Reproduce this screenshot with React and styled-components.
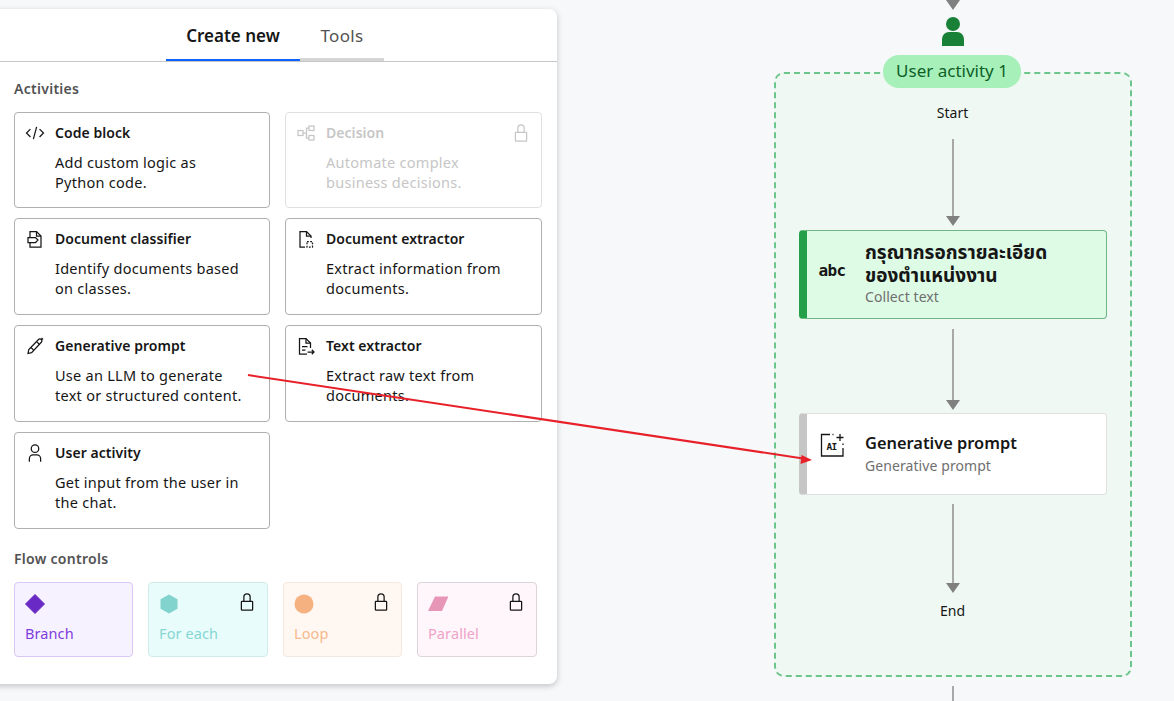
import React from 'react';
import styled, { createGlobalStyle } from 'styled-components';

const FONT = `"Noto Sans", "Noto Sans Thai", "DejaVu Sans", sans-serif`;

const GlobalStyle = createGlobalStyle`
  html, body {
    margin: 0;
    padding: 0;
    height: 701px;
    overflow: hidden;
    background: #f7f8fa;
    font-family: ${FONT};
  }
`;

const Page = styled.div`
  position: relative;
  display: flex;
  align-items: flex-start;
  width: 1174px;
  height: 701px;
  overflow: hidden;
`;

const Panel = styled.aside`
  flex: none;
  width: 567px;
  height: 675px;
  margin: 9px 0 0 -10px;
  background: #fff;
  border-radius: 8px;
  box-shadow: 0 2px 6px rgba(0, 0, 0, 0.22);
`;

const TabBar = styled.div`
  display: flex;
  height: 52px;
  padding-left: 176px;
  border-bottom: 1px solid #c6c6c6;
`;

const Tab = styled.div`
  display: flex;
  align-items: center;
  justify-content: center;
  width: ${({ $active }) => ($active ? '134px' : '84px')};
  height: 52px;
  padding-top: 3px;
  box-sizing: border-box;
  border-bottom: ${({ $active }) => ($active ? '2px solid #0f62fe' : '3px solid #d6d6d6')};
  font-size: 17px;
  font-weight: ${({ $active }) => ($active ? 600 : 400)};
  letter-spacing: ${({ $active }) => ($active ? '0' : '0.3px')};
  color: ${({ $active }) => ($active ? '#161616' : '#525252')};
`;

const Body = styled.div`
  padding: 0 15px 0 24px;
`;

const SectionLabel = styled.div`
  height: 20px;
  margin: ${({ $top }) => $top} 0 13px;
  font-size: 14px;
  line-height: 20px;
  font-weight: 600;
  color: #525252;
  letter-spacing: 0.28px;
`;

const ActivityGrid = styled.div`
  display: grid;
  grid-template-columns: 256px 257px;
  grid-template-rows: 96px 97px 97px 97px;
  column-gap: 15px;
  row-gap: 10px;
`;

const Card = styled.div`
  display: grid;
  grid-template-columns: 20px 1fr 20px;
  grid-template-rows: 20px auto;
  column-gap: 10px;
  row-gap: 9px;
  padding: 10px;
  box-sizing: border-box;
  background: #fff;
  border: 1px solid ${({ $disabled }) => ($disabled ? '#e0e0e0' : '#b0b0b0')};
  border-radius: 4px;
  color: ${({ $disabled }) => ($disabled ? '#c6c6c6' : '#161616')};
  svg {
    display: block;
  }
`;

const CardTitle = styled.div`
  font-size: 14px;
  line-height: 20px;
  font-weight: 600;
  letter-spacing: 0.05px;
  white-space: nowrap;
`;

const CardText = styled.div`
  grid-column: 2 / 4;
  font-size: 14.5px;
  line-height: 20px;
  letter-spacing: 0.27px;
  white-space: pre-line;
`;

const ControlRow = styled.div`
  display: grid;
  grid-template-columns: 119px 120px 119px 120px;
  column-gap: 15px;
`;

const ControlCard = styled.div`
  display: flex;
  flex-direction: column;
  justify-content: space-between;
  height: 75px;
  padding: 11px 10px 13px;
  box-sizing: border-box;
  background: ${({ $bg }) => $bg};
  border: 1px solid ${({ $border }) => $border};
  border-radius: 4px;
  color: ${({ $color }) => $color};
  font-size: 14.5px;
  line-height: 20px;
  letter-spacing: 0.1px;
`;

const ControlHead = styled.div`
  display: flex;
  justify-content: space-between;
  align-items: flex-start;
  height: 20px;
  color: #161616;
  svg + svg {
    margin-top: -2px;
  }
`;

const Canvas = styled.main`
  display: flex;
  flex-direction: column;
  align-items: center;
  flex: none;
  width: 358px;
  margin-left: 217px;
`;

const ArrowHead = styled.div`
  flex: none;
  width: 0;
  height: 0;
  margin-right: 1px;
  border-left: 7px solid transparent;
  border-right: 7px solid transparent;
  border-top: 10px solid #808080;
`;

const Person = styled.svg`
  flex: none;
  display: block;
  margin: 7px 1px 0 0;
`;

const Group = styled.section`
  position: relative;
  display: flex;
  flex-direction: column;
  align-items: center;
  flex: none;
  width: 358px;
  height: 605px;
  margin-top: 26px;
  box-sizing: border-box;
  background: #eff8f3;
  border: 2px dashed #6cc58a;
  border-radius: 10px;
`;

const Pill = styled.div`
  position: absolute;
  top: -19px;
  left: 107px;
  width: 138px;
  height: 33px;
  padding-bottom: 2px;
  box-sizing: border-box;
  display: flex;
  align-items: center;
  justify-content: center;
  background: #a7f0ba;
  border-radius: 16px;
  color: #0e6027;
  font-size: 17px;
`;

const EndLabel = styled.div`
  height: 20px;
  margin: ${({ $top }) => $top} 1px 0 0;
  font-size: 14px;
  line-height: 20px;
  color: #161616;
`;

const Line = styled.div`
  flex: none;
  width: 2px;
  height: ${({ $h }) => $h};
  margin: ${({ $top }) => $top} 1px 0 0;
  background: #a8a8a8;
`;

const Node = styled.div`
  display: flex;
  align-items: center;
  flex: none;
  width: 308px;
  height: ${({ $h }) => $h};
  margin-top: ${({ $top }) => $top};
  padding-bottom: 2px;
  box-sizing: border-box;
  overflow: hidden;
  background: ${({ $bg }) => $bg};
  border: 1px solid ${({ $border }) => $border};
  border-left: 8px solid ${({ $bar }) => $bar};
  border-radius: 4px;
`;

const NodeIcon = styled.div`
  flex: none;
  display: flex;
  align-items: center;
  justify-content: center;
  width: 50px;
  height: 26px;
  margin: 0 8px ${({ $lift }) => $lift} 0;
  color: #161616;
  font-family: "DejaVu Sans Mono", monospace;
  font-size: 16px;
  font-weight: 700;
  letter-spacing: -0.6px;
`;

const NodeTitle = styled.div`
  font-size: ${({ $size }) => $size || '16.4px'};
  line-height: 23px;
  font-weight: ${({ $size }) => ($size ? 700 : 600)};
  color: #161616;
  white-space: pre-line;
`;

const NodeSub = styled.div`
  margin-top: ${({ $gap }) => $gap || '0'};
  font-size: 14px;
  line-height: 20px;
  color: #6f6f6f;
  letter-spacing: 0.08px;
`;

const TailLine = styled.div`
  flex: none;
  width: 2px;
  height: 20px;
  margin: 9px 1px 0 0;
  background: #a8a8a8;
`;

const Annotation = styled.svg`
  position: absolute;
  top: 0;
  left: 0;
  pointer-events: none;
`;

const LockIcon = () => (
  <svg width="20" height="20" viewBox="0 0 32 32" fill="currentColor">
    <path d="M24,14H22V8A6,6,0,0,0,10,8v6H8a2,2,0,0,0-2,2V28a2,2,0,0,0,2,2H24a2,2,0,0,0,2-2V16A2,2,0,0,0,24,14ZM12,8a4,4,0,0,1,8,0v6H12ZM24,28H8V16H24Z" />
  </svg>
);

const CodeIcon = () => (
  <svg width="20" height="20" viewBox="0 0 32 32" fill="currentColor">
    <path d="M31 16L24 23 22.59 21.59 28.17 16 22.59 10.41 24 9 31 16zM1 16L8 9 9.41 10.41 3.83 16 9.41 21.59 8 23 1 16zM12.42 25.48L17.64 6 19.57 6.52 14.35 26z" />
  </svg>
);

const DecisionIcon = () => (
  <svg width="20" height="20" viewBox="0 0 20 20" fill="none" stroke="currentColor" strokeWidth="1.25">
    <rect x="2" y="7.5" width="5" height="5" />
    <rect x="13" y="3" width="5" height="4.5" />
    <rect x="13" y="12.5" width="5" height="4.5" />
    <path d="M7 10h3.5M13 5h-2.5v10H13" />
  </svg>
);

const ClassifierIcon = () => (
  <svg width="20" height="20" viewBox="0 0 20 20" fill="none" stroke="currentColor" strokeWidth="1.25">
    <path d="M5 8V2.5h6.5L16 7V18H5V14" />
    <path d="M11.5 2.5V7H16" />
    <path d="M3 8.5h7.5l2.5 2.5-2.5 2.5H3z" />
  </svg>
);

const ExtractorIcon = () => (
  <svg width="20" height="20" viewBox="0 0 20 20" fill="none" stroke="currentColor" strokeWidth="1.25">
    <path d="M9 18H4V2.5h6.5L15 7v2" />
    <path d="M10.5 2.5V7H15" />
    <path d="M11 12.5h5.5v5.5H11z" strokeDasharray="1.8 1.4" />
  </svg>
);

const PencilIcon = () => (
  <svg width="20" height="20" viewBox="0 0 20 20" fill="none" stroke="currentColor" strokeWidth="1.25">
    <path d="M3 17.5l.8-4L13.5 3.5a1.9 1.9 0 0 1 2.8 2.8L6.6 16.6z" />
    <path d="M6 11.5l2.6 2.6M12 6l2.6 2.6" />
    <path d="M16.5 2l1.5 1.5" />
  </svg>
);

const TextExtractIcon = () => (
  <svg width="20" height="20" viewBox="0 0 20 20" fill="none" stroke="currentColor" strokeWidth="1.25">
    <path d="M11 18H3.5V2.5H10L14.5 7v5" />
    <path d="M10 2.5V7h4.5" />
    <path d="M6 10.5h5.5M6 14h3.5" />
    <path d="M11.5 16h6.5M15.8 13.8l2.2 2.2-2.2 2.2" />
  </svg>
);

const UserIcon = () => (
  <svg width="20" height="20" viewBox="0 0 32 32" fill="currentColor">
    <path d="M16,4a5,5,0,1,1-5,5,5,5,0,0,1,5-5m0-2a7,7,0,1,0,7,7A7,7,0,0,0,16,2Z" />
    <path d="M26,30H24V25a5,5,0,0,0-5-5H13a5,5,0,0,0-5,5v5H6V25a7,7,0,0,1,7-7h6a7,7,0,0,1,7,7Z" />
  </svg>
);

const DiamondShape = () => (
  <svg width="20" height="20" viewBox="0 0 20 20">
    <path d="M10 .5L19.5 10 10 19.5.5 10z" fill="#6929c4" strokeLinejoin="round" stroke="#6929c4" />
  </svg>
);

const HexShape = () => (
  <svg width="20" height="20" viewBox="0 0 20 20">
    <path d="M10 .5l8.5 4.8v9.4L10 19.5l-8.5-4.8V5.3z" fill="#82d2ce" />
  </svg>
);

const CircleShape = () => (
  <svg width="20" height="20" viewBox="0 0 20 20">
    <circle cx="10" cy="10" r="9.5" fill="#f5b17f" />
  </svg>
);

const ParallelShape = () => (
  <svg width="20" height="20" viewBox="0 0 20 20">
    <path d="M7 2.5h13.5L14 17H0z" fill="#e896b8" />
  </svg>
);

const AiIcon = () => (
  <svg width="24" height="24" viewBox="0 0 24 24" fill="none" stroke="#161616" strokeWidth="1.3">
    <path d="M10 1.5H1.5V23H23V15" />
    <path d="M20 1v7M16.5 4.5h7" />
    <path d="M12.5 1.5h1M23 10.5V12" />
    <text x="11.5" y="16.5" textAnchor="middle" fill="#161616" stroke="none" fontSize="9.5" fontWeight="700" fontFamily="'DejaVu Sans Mono', monospace">AI</text>
  </svg>
);

const activities = [
  { title: 'Code block', text: 'Add custom logic as\nPython code.', Icon: CodeIcon },
  { title: 'Decision', text: 'Automate complex\nbusiness decisions.', Icon: DecisionIcon, disabled: true },
  { title: 'Document classifier', text: 'Identify documents based\non classes.', Icon: ClassifierIcon },
  { title: 'Document extractor', text: 'Extract information from\ndocuments.', Icon: ExtractorIcon },
  { title: 'Generative prompt', text: 'Use an LLM to generate\ntext or structured content.', Icon: PencilIcon },
  { title: 'Text extractor', text: 'Extract raw text from\ndocuments.', Icon: TextExtractIcon },
  { title: 'User activity', text: 'Get input from the user in\nthe chat.', Icon: UserIcon },
];

const controls = [
  { label: 'Branch', Shape: DiamondShape, bg: '#f6f2ff', border: '#d9c7f5', color: '#7f3ddb' },
  { label: 'For each', Shape: HexShape, bg: '#e8fcfb', border: '#d0ecea', color: '#86d6d2', locked: true },
  { label: 'Loop', Shape: CircleShape, bg: '#fff7f2', border: '#f5e8df', color: '#f7b98c', locked: true },
  { label: 'Parallel', Shape: ParallelShape, bg: '#fff6fb', border: '#ddd3da', color: '#efa3c8', locked: true },
];

const App = () => (
  <Page>
    <GlobalStyle />
    <Panel>
      <TabBar>
        <Tab $active>Create new</Tab>
        <Tab>Tools</Tab>
      </TabBar>
      <Body>
        <SectionLabel $top="17px">Activities</SectionLabel>
        <ActivityGrid>
          {activities.map(({ title, text, Icon, disabled }) => (
            <Card key={title} $disabled={disabled}>
              <Icon />
              <CardTitle>{title}</CardTitle>
              {disabled ? <LockIcon /> : <span />}
              <CardText>{text}</CardText>
            </Card>
          ))}
        </ActivityGrid>
        <SectionLabel $top="20px">Flow controls</SectionLabel>
        <ControlRow>
          {controls.map(({ label, Shape, bg, border, color, locked }) => (
            <ControlCard key={label} $bg={bg} $border={border} $color={color}>
              <ControlHead>
                <Shape />
                {locked && <LockIcon />}
              </ControlHead>
              <div>{label}</div>
            </ControlCard>
          ))}
        </ControlRow>
      </Body>
    </Panel>
    <Canvas>
      <ArrowHead />
      <Person width="22" height="29" viewBox="0 0 22 29" fill="#198038">
        <circle cx="11" cy="7" r="7" />
        <path d="M0 29v-7a7 7 0 0 1 7-7h8a7 7 0 0 1 7 7v7z" />
      </Person>
      <Group>
        <Pill>User activity 1</Pill>
        <EndLabel $top="29px">Start</EndLabel>
        <Line $h="77px" $top="16px" />
        <ArrowHead />
        <Node $h="89px" $top="4px" $bg="#defbe6" $border="#6fb587" $bar="#24a148">
          <NodeIcon $lift="7px">abc</NodeIcon>
          <div>
            <NodeTitle $size="19px">{'กรุณากรอกรายละเอียด\nของตำแหน่งงาน'}</NodeTitle>
            <NodeSub>Collect text</NodeSub>
          </div>
        </Node>
        <Line $h="71px" $top="10px" />
        <ArrowHead />
        <Node $h="82px" $top="3px" $bg="#fff" $border="#e0e0e0" $bar="#c6c6c6">
          <NodeIcon $lift="16px"><AiIcon /></NodeIcon>
          <div>
            <NodeTitle>Generative prompt</NodeTitle>
            <NodeSub $gap="2px">Generative prompt</NodeSub>
          </div>
        </Node>
        <Line $h="79px" $top="9px" />
        <ArrowHead />
        <EndLabel $top="8px">End</EndLabel>
      </Group>
      <TailLine />
    </Canvas>
    <Annotation width="1174" height="701" viewBox="0 0 1174 701">
      <path d="M248 375L803 458.5" stroke="#e8202a" strokeWidth="2" />
      <path d="M812 460L801.5 455L800.5 464z" fill="#e8202a" />
    </Annotation>
  </Page>
);

export default App;
